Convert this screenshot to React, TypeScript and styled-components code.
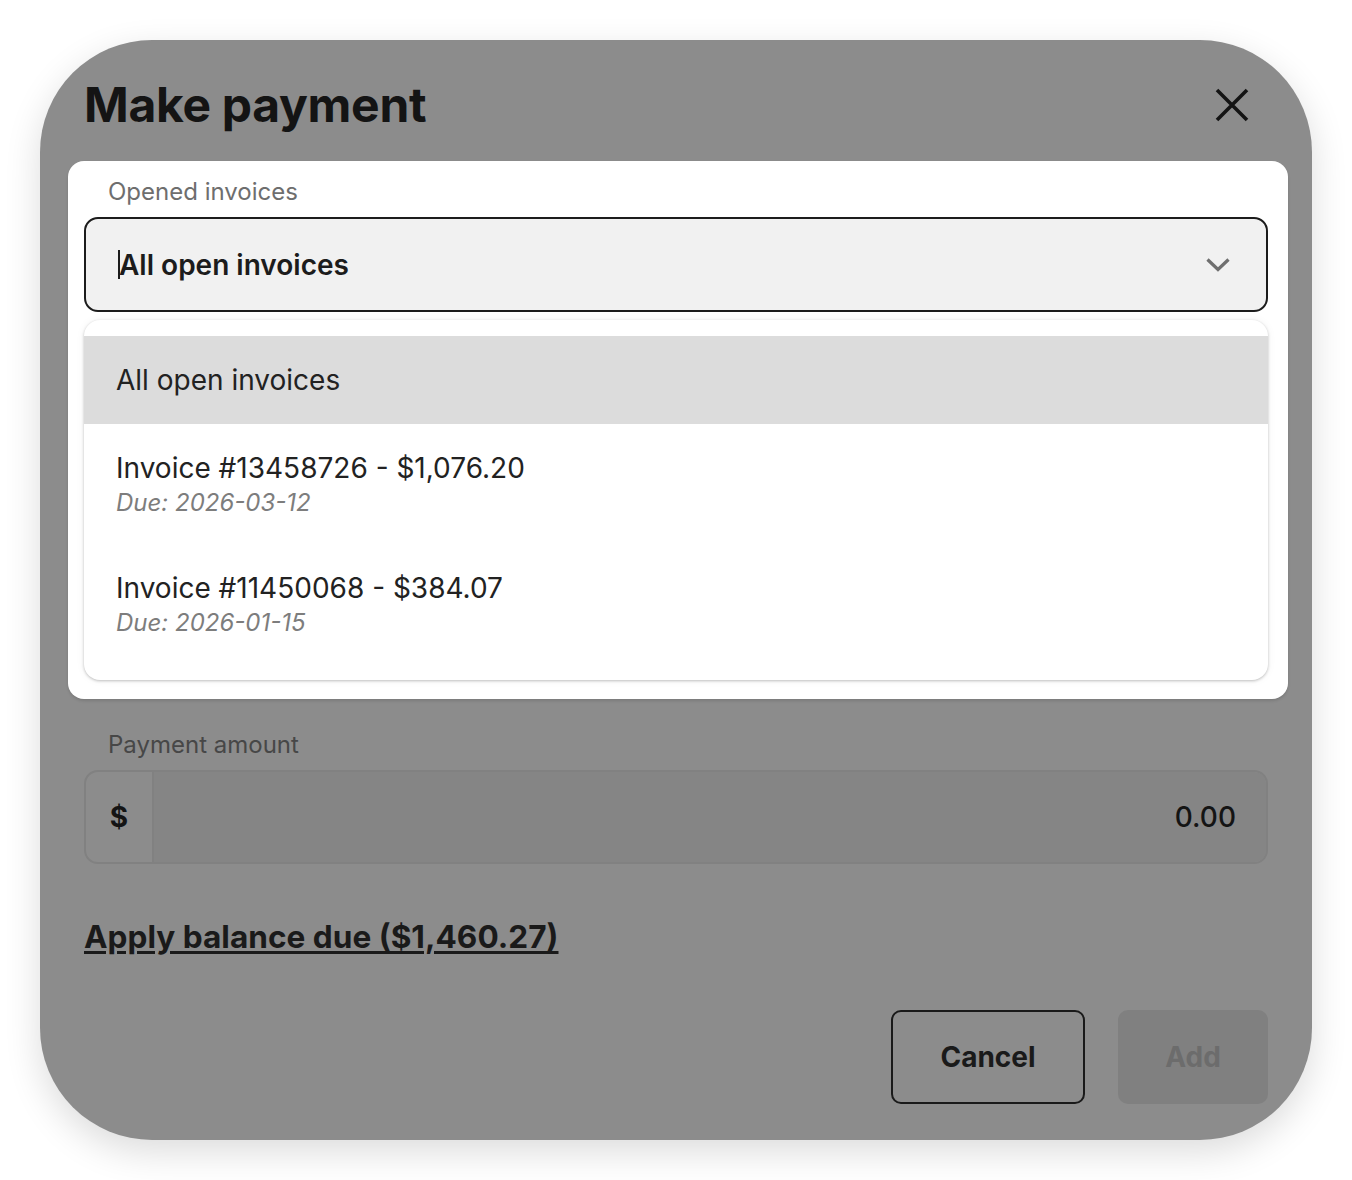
import styled, { createGlobalStyle } from "styled-components";

const Global = createGlobalStyle`
  html, body {
    margin: 0;
    padding: 0;
    background: #ffffff;
    font-family: Inter, "Noto Sans", sans-serif;
  }
`;

const Page = styled.div`
  padding: 40px;
`;

const Modal = styled.div`
  width: 1272px;
  height: 1100px;
  box-sizing: border-box;
  background: #8c8c8c;
  border-radius: 112px;
  padding: 37px 44px 36px;
  display: flex;
  flex-direction: column;
  box-shadow: 0 12px 36px rgba(0, 0, 0, 0.14);
`;

const Header = styled.div`
  display: flex;
  align-items: center;
  justify-content: space-between;
  height: 56px;
  margin-bottom: 28px;
`;

const Title = styled.h1`
  margin: 0;
  font-size: 48px;
  line-height: 56px;
  font-weight: 700;
  color: #141414;
  letter-spacing: -0.3px;
`;

const CloseButton = styled.button`
  border: 0;
  background: none;
  padding: 0;
  width: 40px;
  height: 40px;
  margin-right: 16px;
  display: flex;
  align-items: center;
  justify-content: center;
`;

const Spotlight = styled.div`
  margin: 0 -20px 0 -16px;
  padding: 17px 20px 19px 16px;
  background: #ffffff;
  border-radius: 16px;
  box-shadow: 0 2px 3px rgba(0, 0, 0, 0.12);
  display: flex;
  flex-direction: column;
`;

const FieldLabel = styled.label<{ dim?: boolean }>`
  display: block;
  padding-left: 24px;
  font-size: 24px;
  line-height: 28px;
  color: ${(p) => (p.dim ? "#474747" : "#6e6e6e")};
  margin-bottom: 11px;
`;

const SelectBox = styled.div`
  height: 95px;
  box-sizing: border-box;
  border: 2px solid #1c1c1c;
  border-radius: 14px;
  background: #f1f1f1;
  display: flex;
  align-items: center;
  padding: 0 34px 0 32px;
`;

const Caret = styled.span`
  display: inline-block;
  width: 2px;
  height: 29px;
  background: #1c1c1c;
  margin-right: -1px;
`;

const SelectValue = styled.span`
  flex: 1;
  font-size: 28px;
  font-weight: 600;
  color: #1c1c1c;
`;

const Menu = styled.ul`
  list-style: none;
  margin: 8px 0 0;
  padding: 16px 0;
  background: #ffffff;
  border-radius: 16px;
  box-shadow: 0 1px 3px rgba(0, 0, 0, 0.24), 0 0 10px rgba(0, 0, 0, 0.05);
`;

const MenuItem = styled.li<{ active?: boolean }>`
  padding: 27px 32px;
  background: ${(p) => (p.active ? "#dcdcdc" : "transparent")};
`;

const ItemTitle = styled.div`
  font-size: 28px;
  line-height: 34px;
  color: #222222;
`;

const ItemDue = styled.div`
  font-size: 24px;
  line-height: 28px;
  margin-top: 4px;
  font-style: italic;
  color: #7d7d7d;
`;

const AmountSection = styled.div`
  margin-top: 32px;
`;

const AmountInput = styled.div`
  height: 94px;
  box-sizing: border-box;
  border: 2px solid #818181;
  border-radius: 14px;
  display: flex;
  overflow: hidden;
`;

const Prefix = styled.div`
  width: 66px;
  border-right: 2px solid #818181;
  display: flex;
  align-items: center;
  justify-content: center;
  font-size: 28px;
  font-weight: 700;
  color: #141414;
`;

const AmountValue = styled.div`
  flex: 1;
  background: #858585;
  display: flex;
  align-items: center;
  justify-content: flex-end;
  padding-right: 30px;
  font-size: 28px;
  font-weight: 500;
  color: #141414;
`;

const BalanceLink = styled.a`
  margin-top: 55px;
  align-self: flex-start;
  font-size: 31.6px;
  line-height: 36px;
  font-weight: 700;
  color: #1a1a1a;
  text-decoration: underline;
  text-underline-offset: 3px;
`;

const Footer = styled.div`
  margin-top: auto;
  display: flex;
  justify-content: flex-end;
  gap: 33px;
`;

const Button = styled.button<{ variant: "outline" | "disabled" }>`
  height: 94px;
  box-sizing: border-box;
  border-radius: 10px;
  font-family: inherit;
  font-size: 28px;
  font-weight: 700;
  width: ${(p) => (p.variant === "outline" ? "194px" : "150px")};
  border: ${(p) => (p.variant === "outline" ? "2px solid #1a1a1a" : "0")};
  background: ${(p) => (p.variant === "outline" ? "transparent" : "#808080")};
  color: ${(p) => (p.variant === "outline" ? "#1a1a1a" : "#6c6c6c")};
`;

const invoices = [
  { id: "13458726", amount: "$1,076.20", due: "2026-03-12" },
  { id: "11450068", amount: "$384.07", due: "2026-01-15" },
];

export default function App() {
  return (
    <>
      <Global />
      <Page>
        <Modal>
          <Header>
            <Title>Make payment</Title>
            <CloseButton aria-label="Close">
              <svg width="34" height="34" viewBox="0 0 34 34">
                <path d="M2 2 L32 32 M32 2 L2 32" stroke="#141414" strokeWidth="3.6" fill="none" />
              </svg>
            </CloseButton>
          </Header>

          <Spotlight>
            <FieldLabel>Opened invoices</FieldLabel>
            <SelectBox>
              <Caret />
              <SelectValue>All open invoices</SelectValue>
              <svg width="28" height="28" viewBox="0 0 28 28">
                <polyline points="3.5 8.5 14 18.5 24.5 8.5" stroke="#6f6f6f" strokeWidth="3.2" fill="none" />
              </svg>
            </SelectBox>
            <Menu>
              <MenuItem active>
                <ItemTitle>All open invoices</ItemTitle>
              </MenuItem>
              {invoices.map((inv) => (
                <MenuItem key={inv.id}>
                  <ItemTitle>
                    Invoice #{inv.id} - {inv.amount}
                  </ItemTitle>
                  <ItemDue>Due: {inv.due}</ItemDue>
                </MenuItem>
              ))}
            </Menu>
          </Spotlight>

          <AmountSection>
            <FieldLabel dim>Payment amount</FieldLabel>
            <AmountInput>
              <Prefix>$</Prefix>
              <AmountValue>0.00</AmountValue>
            </AmountInput>
          </AmountSection>

          <BalanceLink>Apply balance due ($1,460.27)</BalanceLink>

          <Footer>
            <Button variant="outline">Cancel</Button>
            <Button variant="disabled">Add</Button>
          </Footer>
        </Modal>
      </Page>
    </>
  );
}
